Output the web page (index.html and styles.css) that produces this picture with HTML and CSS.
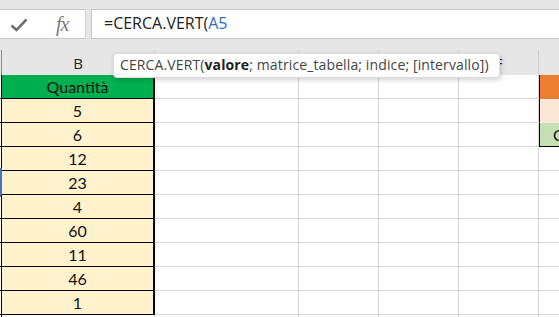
FILE: index.html
```html
<!DOCTYPE html>
<html lang="it">
<head>
<meta charset="utf-8">
<link rel="stylesheet" href="styles.css">
</head>
<body>
<div class="app">
  <div class="topbar">
    <div class="fxbox">
      <svg class="check" width="18" height="14" viewBox="0 0 18 14"><path d="M1.5 7.5 L6.5 12 L16.5 1.5" fill="none" stroke="#6f6f6f" stroke-width="2.6"/></svg>
      <span class="fx">fx</span>
    </div>
    <div class="formula">=CERCA.VERT(<span class="ref">A5</span></div>
  </div>
  <div class="colheads">
    <div class="ch cha"></div>
    <div class="ch">B</div>
    <div class="ch">C</div>
    <div class="ch">D</div>
    <div class="ch">E</div>
    <div class="ch">F</div>
    <div class="ch">G</div>
  </div>
  <div class="sheet">
    <div class="row"><div class="c a"></div><div class="c b head">Quantità</div><div class="c"></div><div class="c"></div><div class="c"></div><div class="c"></div><div class="c g orange"></div></div>
    <div class="row"><div class="c a"></div><div class="c b">5</div><div class="c"></div><div class="c"></div><div class="c"></div><div class="c"></div><div class="c g peach"></div></div>
    <div class="row"><div class="c a"></div><div class="c b">6</div><div class="c"></div><div class="c"></div><div class="c"></div><div class="c"></div><div class="c g lgreen">Conteggio</div></div>
    <div class="row"><div class="c a"></div><div class="c b">12</div><div class="c"></div><div class="c"></div><div class="c"></div><div class="c"></div><div class="c"></div></div>
    <div class="row"><div class="c a sel"><span class="h h1"></span><span class="h h2"></span></div><div class="c b">23</div><div class="c"></div><div class="c"></div><div class="c"></div><div class="c"></div><div class="c"></div></div>
    <div class="row"><div class="c a"></div><div class="c b">4</div><div class="c"></div><div class="c"></div><div class="c"></div><div class="c"></div><div class="c"></div></div>
    <div class="row"><div class="c a"></div><div class="c b">60</div><div class="c"></div><div class="c"></div><div class="c"></div><div class="c"></div><div class="c"></div></div>
    <div class="row"><div class="c a"></div><div class="c b">11</div><div class="c"></div><div class="c"></div><div class="c"></div><div class="c"></div><div class="c"></div></div>
    <div class="row"><div class="c a"></div><div class="c b">46</div><div class="c"></div><div class="c"></div><div class="c"></div><div class="c"></div><div class="c"></div></div>
    <div class="row"><div class="c a"></div><div class="c b">1</div><div class="c"></div><div class="c"></div><div class="c"></div><div class="c"></div><div class="c"></div></div>
    <div class="row"><div class="c a"></div><div class="c"></div><div class="c"></div><div class="c"></div><div class="c"></div><div class="c"></div><div class="c"></div></div>
  </div>
  <div class="tip">CERCA.VERT(<b>valore</b>; matrice_tabella; indice; [intervallo])</div>
</div>
</body>
</html>
```

FILE: styles.css
```css
html, body { margin: 0; padding: 0; }
body { background: #fff; font-family: "Open Sans", "Noto Sans", sans-serif; }
.app { position: relative; width: 559px; height: 317px; overflow: hidden; }
.topbar {
  height: 48px; box-sizing: border-box; background: #e6e6e6;
  padding-top: 9px; display: flex; align-items: flex-start;
}
.fxbox {
  width: 86px; height: 30px; box-sizing: border-box; background: #fff;
  border-top: 1px solid #c6c6c6; border-bottom: 1px solid #c6c6c6; border-right: 1px solid #d0d0d0;
  display: flex; align-items: center;
}
.check { margin-left: 10px; margin-top: 1px; }
.fx {
  margin-left: 28px; font-family: "Liberation Serif", serif; font-style: italic;
  font-size: 20px; color: #7a7a7a; letter-spacing: -1px;
}
.formula {
  flex: 1; margin-left: 5px; height: 30px; box-sizing: border-box; background: #fff;
  border: 1px solid #c6c6c6; border-right: none;
  font-size: 16px; line-height: 27px; padding-left: 12px; color: #222;
}
.ref { color: #2e6bc6; }
.colheads, .row {
  display: grid; grid-template-columns: 2px 153px 144px 80px 80px 80px 80px;
  width: 619px;
}
.colheads {
  height: 27px; box-sizing: border-box; background: #e6e6e6; padding-top: 2px;
}
.ch {
  border-right: 1px solid #cfcfcf; text-align: center;
  font-size: 15px; line-height: 26px; color: #222;
}
.cha { border-right-color: #8a8a8a; }
.sheet { display: flex; flex-direction: column; }
.row { height: 24px; }
.c {
  box-sizing: border-box; border-right: 1px solid #d6d6d6; border-bottom: 1px solid #d6d6d6;
  font-family: "Lato", "Open Sans", sans-serif; font-size: 16px; line-height: 23px; color: #111;
  position: relative; white-space: nowrap; overflow: hidden;
}
.a { border-right: 1px solid #000; border-bottom: 1px solid #000; overflow: visible; }
.b {
  background: #fff2cc; text-align: center; border-right: 2px solid #000; border-bottom: 1px solid #000;
}
.head { background: #00b050; }
.c.g { border-left: 1px solid #000; border-right: none; padding-left: 13px; }
.orange { background: #ed7d31; border-bottom-color: #ed7d31; }
.peach { background: #fbe5d6; border-bottom-color: #fbe5d6; }
.c.lgreen { background: #c5e0b4; border-bottom-color: #000; }
.c.sel { border-right: 2px solid #4472c4; }
.h { position: absolute; left: -2px; width: 4px; height: 5px; background: #4472c4; }
.h1 { top: -3px; }
.h2 { bottom: -3px; }
.tip {
  position: absolute; left: 113px; top: 53px; height: 25px; box-sizing: border-box;
  padding: 0 10px 0 6px; background: #fff; border: 1px solid #dcdcdc; border-radius: 4px;
  box-shadow: 1px 2px 5px rgba(0,0,0,0.18);
  font-family: "Open Sans", sans-serif; font-size: 14px; line-height: 22px; color: #444;
  letter-spacing: 0.12px;
}
.tip b { color: #222; }
```
